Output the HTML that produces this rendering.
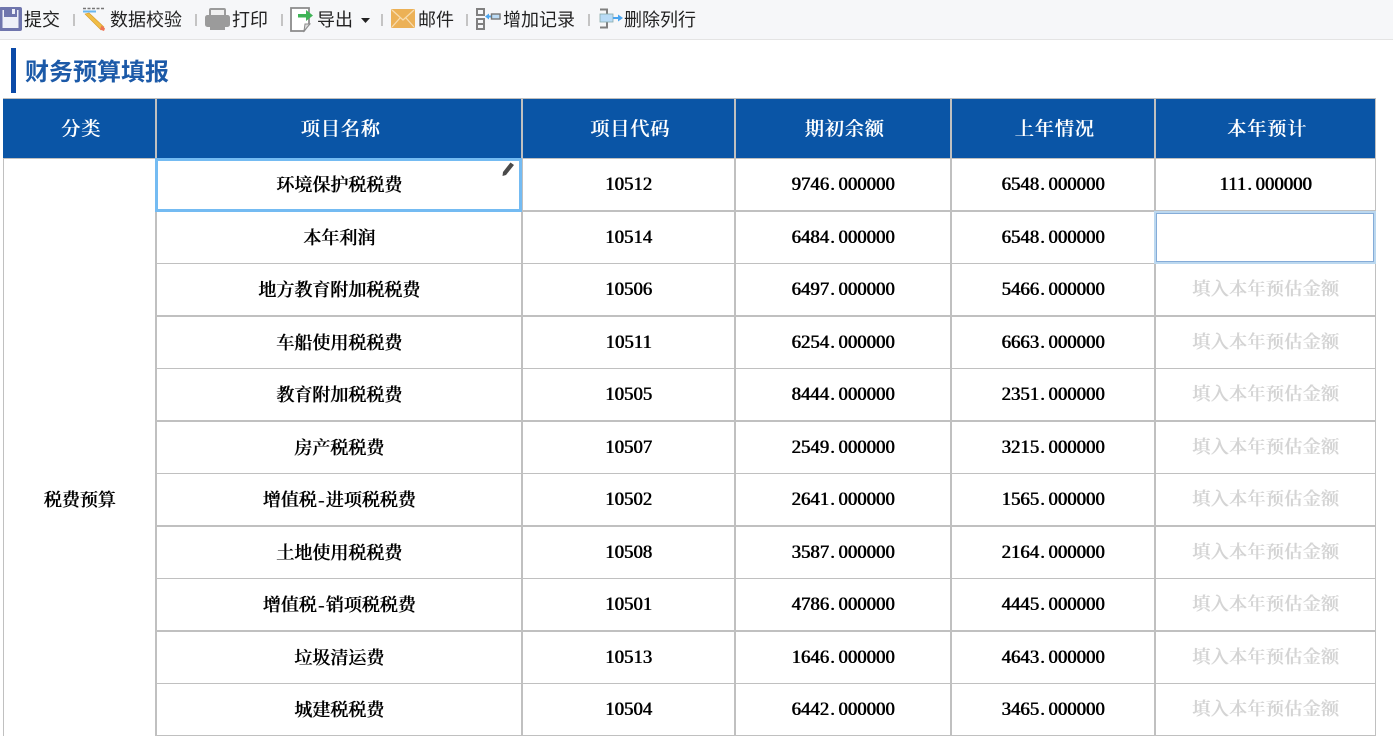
<!DOCTYPE html>
<html lang="zh-CN"><head><meta charset="utf-8"><title>财务预算填报</title>
<style>
html,body{margin:0;padding:0;width:1393px;height:736px;overflow:hidden;background:#fff}
#p{position:relative;width:1393px;height:736px;overflow:hidden}
#tb{position:absolute;left:0;top:0;width:1393px;height:39px;background:#f6f7f9;border-bottom:1px solid #e4e4e4}
.t{position:absolute;top:7px;height:26px;font:18px/26px "Liberation Sans","Noto Sans CJK SC",sans-serif;color:#222;white-space:nowrap}
.s{position:absolute;top:14px;width:2px;height:12px;background:#c4c4c4}
svg{position:absolute;overflow:visible}
#bar{position:absolute;left:11px;top:48px;width:5px;height:45px;background:#0b4aa8}
#ti{position:absolute;left:25px;top:55px;font:bold 24px/36px "Liberation Sans","Noto Sans CJK SC",sans-serif;color:#1c5aa8;white-space:nowrap}
#hd{position:absolute;left:3px;top:98px;width:1373px;height:60px;background:#0a55a6;border-top:1px solid #bdbdbd;box-sizing:border-box}
.v,.h{position:absolute;background:#c0c0c0}
.c{position:absolute;height:52px;margin-top:1px;text-align:center;font:400 18px/52px "Liberation Serif","Noto Serif CJK SC",serif;text-shadow:.7px 0 0 #000;color:#000;white-space:nowrap}
.hc{height:60px;top:98px;font-size:19px;line-height:60px;letter-spacing:1px;color:#fff;margin-top:2px;transform:translateX(1.500px);text-shadow:.8px 0 0 #fff}
.ph{color:#d4d4d4;letter-spacing:.4px;margin-top:0;text-shadow:.8px 0 0 #d4d4d4}
.n{font-size:18.600px;letter-spacing:.1px}
.n i{font-style:normal;padding:0 3.500px 0 1px}
.m{padding:0 1.500px}
</style></head><body><div id="p">
<div id="tb"></div>

<svg style="left:0;top:7px" width="22" height="24" viewBox="0 0 22 24"><rect x="-1" y="0" width="23" height="24" rx="2" fill="#6f75ad"/><rect x="2.500" y="3" width="16" height="18" fill="#eef0f8"/><rect x="4" y="0" width="13" height="10" fill="#6f75ad"/><rect x="12" y="2" width="3" height="5" fill="#eef0f8"/></svg>
<div class="t" style="left:24px">提交</div>
<div class="s" style="left:73px"></div>

<svg style="left:83px;top:7px" width="24" height="25" viewBox="0 0 24 25"><path d="M0 1.500H21" stroke="#777" stroke-width="1.600" stroke-dasharray="3 1.500" fill="none"/><path d="M0 4.500H13" stroke="#6ab7f0" stroke-width="2" fill="none"/><path d="M2 7L6 6 21 20 18 23z" fill="#f0bd45" stroke="#d69b2e" stroke-width=".6"/><path d="M18.500 18.500L22 21.500 21 24 17 22.500z" fill="#ee7455"/></svg>
<div class="t" style="left:110px">数据校验</div>
<div class="s" style="left:195px"></div>

<svg style="left:205px;top:8px" width="25" height="22" viewBox="0 0 25 22"><rect x="5" y="1" width="15" height="8" rx="1" fill="#f0f0f0" stroke="#9b9b9b" stroke-width="2"/><rect x="0" y="7" width="25" height="12" rx="2.500" fill="#9b9b9b"/><rect x="5" y="15" width="15" height="7" fill="#9b9b9b"/></svg>
<div class="t" style="left:232px">打印</div>
<div class="s" style="left:281px"></div>

<svg style="left:290px;top:7px" width="24" height="25" viewBox="0 0 24 25"><path d="M1 1H19V17L14 24H1z" fill="#fff" stroke="#8b8b8b" stroke-width="1.800"/><path d="M14 24L15 17H20z" fill="#ddd" stroke="#8b8b8b" stroke-width="1"/><path d="M8 7H16V3L23 8.500 16 14V10.500H8z" fill="#3fb356"/></svg>
<div class="t" style="left:317px">导出</div>
<svg style="left:361px;top:18px" width="9" height="5" viewBox="0 0 9 5"><path d="M0 0H9L4.500 5z" fill="#222"/></svg>
<div class="s" style="left:381px"></div>

<svg style="left:391px;top:9px" width="24" height="20" viewBox="0 0 24 20"><rect width="24" height="19" rx="1.500" fill="#ecb156"/><path d="M1 1L12 11 23 1M1 18L9 9M23 18L15 9" fill="none" stroke="#f8dcae" stroke-width="1.300"/></svg>
<div class="t" style="left:418px">邮件</div>
<div class="s" style="left:466px"></div>

<svg style="left:476px;top:8px" width="25" height="22" viewBox="0 0 25 22"><rect x="1" y="1" width="7" height="6" fill="none" stroke="#808080" stroke-width="2"/><rect x="1" y="11" width="7" height="10" fill="none" stroke="#808080" stroke-width="2"/><path d="M1 16H8" stroke="#808080" stroke-width="2"/><path d="M9 8.500L13 5.500V11.500z" fill="#4aa5f0"/><path d="M13 8.500H15" stroke="#4aa5f0" stroke-width="2"/><rect x="15.500" y="6" width="8.500" height="5" fill="#bcdcf6" stroke="#777" stroke-width="1.400"/></svg>
<div class="t" style="left:503px">增加记录</div>
<div class="s" style="left:588px"></div>

<svg style="left:599px;top:8px" width="24" height="21" viewBox="0 0 24 21"><path d="M1 1.500H8V6M8 14V19.500H1" fill="none" stroke="#808080" stroke-width="2"/><rect x="1" y="6" width="13" height="8" fill="#b9dbf6" stroke="#8aa" stroke-width=".8"/><path d="M14 10H19" stroke="#4aa5f0" stroke-width="2"/><path d="M24 10L19 6.500V13.500z" fill="#4aa5f0"/></svg>
<div class="t" style="left:624px">删除列行</div>

<div id="bar"></div>
<div id="ti">财务预算填报</div>

<div id="hd"></div>

<div class="v" style="left:3px;top:158px;width:1px;height:578px"></div>
<div class="v" style="left:155px;top:99px;width:2px;height:637px"></div>
<div class="v" style="left:521px;top:99px;width:2px;height:637px"></div>
<div class="v" style="left:734px;top:99px;width:2px;height:637px"></div>
<div class="v" style="left:950px;top:99px;width:2px;height:637px"></div>
<div class="v" style="left:1154px;top:99px;width:2px;height:637px"></div>
<div class="v" style="left:1375px;top:98px;width:1px;height:638px"></div>

<div class="h" style="left:3px;top:158px;width:1373px;height:1px"></div>
<div class="h" style="left:155px;top:210px;width:1221px;height:2px"></div>
<div class="h" style="left:155px;top:263px;width:1221px;height:1px"></div>
<div class="h" style="left:155px;top:315px;width:1221px;height:2px"></div>
<div class="h" style="left:155px;top:368px;width:1221px;height:1px"></div>
<div class="h" style="left:155px;top:420px;width:1221px;height:2px"></div>
<div class="h" style="left:155px;top:473px;width:1221px;height:1px"></div>
<div class="h" style="left:155px;top:525px;width:1221px;height:2px"></div>
<div class="h" style="left:155px;top:578px;width:1221px;height:1px"></div>
<div class="h" style="left:155px;top:630px;width:1221px;height:2px"></div>
<div class="h" style="left:155px;top:683px;width:1221px;height:1px"></div>
<div class="h" style="left:155px;top:735px;width:1221px;height:1px"></div>

<div class="c hc" style="left:4px;width:151px">分类</div>
<div class="c hc" style="left:157px;width:364px">项目名称</div>
<div class="c hc" style="left:523px;width:211px">项目代码</div>
<div class="c hc" style="left:736px;width:214px">期初余额</div>
<div class="c hc" style="left:952px;width:202px">上年情况</div>
<div class="c hc" style="left:1156px;width:219px">本年预计</div>

<div class="c" style="left:4px;width:151px;top:473px">税费预算</div>

<div class="c" style="left:157px;width:364px;top:158px">环境保护税税费</div><div class="c n" style="left:523px;width:211px;top:158px">10512</div><div class="c n" style="left:736px;width:214px;top:158px">9746<i>.</i>000000</div><div class="c n" style="left:952px;width:202px;top:158px">6548<i>.</i>000000</div><div class="c n" style="left:1156px;width:219px;top:158px">111<i>.</i>000000</div>
<div class="c" style="left:157px;width:364px;top:211px">本年利润</div><div class="c n" style="left:523px;width:211px;top:211px">10514</div><div class="c n" style="left:736px;width:214px;top:211px">6484<i>.</i>000000</div><div class="c n" style="left:952px;width:202px;top:211px">6548<i>.</i>000000</div>
<div class="c" style="left:157px;width:364px;top:263px">地方教育附加税税费</div><div class="c n" style="left:523px;width:211px;top:263px">10506</div><div class="c n" style="left:736px;width:214px;top:263px">6497<i>.</i>000000</div><div class="c n" style="left:952px;width:202px;top:263px">5466<i>.</i>000000</div><div class="c ph" style="left:1156px;width:219px;top:263px">填入本年预估金额</div>
<div class="c" style="left:157px;width:364px;top:316px">车船使用税税费</div><div class="c n" style="left:523px;width:211px;top:316px">10511</div><div class="c n" style="left:736px;width:214px;top:316px">6254<i>.</i>000000</div><div class="c n" style="left:952px;width:202px;top:316px">6663<i>.</i>000000</div><div class="c ph" style="left:1156px;width:219px;top:316px">填入本年预估金额</div>
<div class="c" style="left:157px;width:364px;top:368px">教育附加税税费</div><div class="c n" style="left:523px;width:211px;top:368px">10505</div><div class="c n" style="left:736px;width:214px;top:368px">8444<i>.</i>000000</div><div class="c n" style="left:952px;width:202px;top:368px">2351<i>.</i>000000</div><div class="c ph" style="left:1156px;width:219px;top:368px">填入本年预估金额</div>
<div class="c" style="left:157px;width:364px;top:421px">房产税税费</div><div class="c n" style="left:523px;width:211px;top:421px">10507</div><div class="c n" style="left:736px;width:214px;top:421px">2549<i>.</i>000000</div><div class="c n" style="left:952px;width:202px;top:421px">3215<i>.</i>000000</div><div class="c ph" style="left:1156px;width:219px;top:421px">填入本年预估金额</div>
<div class="c" style="left:157px;width:364px;top:473px">增值税<span class="m">-</span>进项税税费</div><div class="c n" style="left:523px;width:211px;top:473px">10502</div><div class="c n" style="left:736px;width:214px;top:473px">2641<i>.</i>000000</div><div class="c n" style="left:952px;width:202px;top:473px">1565<i>.</i>000000</div><div class="c ph" style="left:1156px;width:219px;top:473px">填入本年预估金额</div>
<div class="c" style="left:157px;width:364px;top:526px">土地使用税税费</div><div class="c n" style="left:523px;width:211px;top:526px">10508</div><div class="c n" style="left:736px;width:214px;top:526px">3587<i>.</i>000000</div><div class="c n" style="left:952px;width:202px;top:526px">2164<i>.</i>000000</div><div class="c ph" style="left:1156px;width:219px;top:526px">填入本年预估金额</div>
<div class="c" style="left:157px;width:364px;top:578px">增值税<span class="m">-</span>销项税税费</div><div class="c n" style="left:523px;width:211px;top:578px">10501</div><div class="c n" style="left:736px;width:214px;top:578px">4786<i>.</i>000000</div><div class="c n" style="left:952px;width:202px;top:578px">4445<i>.</i>000000</div><div class="c ph" style="left:1156px;width:219px;top:578px">填入本年预估金额</div>
<div class="c" style="left:157px;width:364px;top:631px">垃圾清运费</div><div class="c n" style="left:523px;width:211px;top:631px">10513</div><div class="c n" style="left:736px;width:214px;top:631px">1646<i>.</i>000000</div><div class="c n" style="left:952px;width:202px;top:631px">4643<i>.</i>000000</div><div class="c ph" style="left:1156px;width:219px;top:631px">填入本年预估金额</div>
<div class="c" style="left:157px;width:364px;top:683px">城建税税费</div><div class="c n" style="left:523px;width:211px;top:683px">10504</div><div class="c n" style="left:736px;width:214px;top:683px">6442<i>.</i>000000</div><div class="c n" style="left:952px;width:202px;top:683px">3465<i>.</i>000000</div><div class="c ph" style="left:1156px;width:219px;top:683px">填入本年预估金额</div>

<div style="position:absolute;left:155px;top:158px;width:367px;height:54px;box-sizing:border-box;border:3px solid #74bbf2"></div>
<svg style="left:502px;top:162px" width="12" height="14" viewBox="0 0 12 14"><path d="M8.500 0.500L12 3 4 13 0.500 14 1 10z" fill="#4a4a4a"/></svg>

<div style="position:absolute;left:1154px;top:211px;width:222px;height:53px;box-sizing:border-box;border:2px solid #bcd8ef;background:#fff"><div style="width:100%;height:100%;box-sizing:border-box;border:1px solid #85acd8"></div></div>
</div></body></html>
